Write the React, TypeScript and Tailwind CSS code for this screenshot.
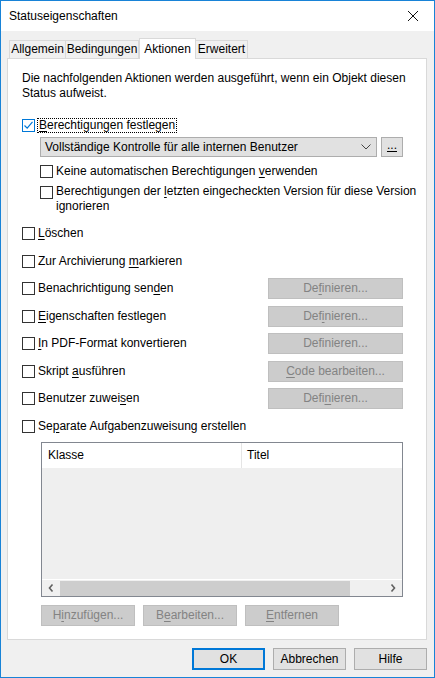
import type { ReactNode } from 'react'

const font = { fontFamily: '"Segoe UI", "Liberation Sans", Arial, sans-serif' }

function U({ children }: { children: ReactNode }) {
  return <span className="underline underline-offset-2 decoration-1">{children}</span>
}

function Box({ checked = false }: { checked?: boolean }) {
  return (
    <div
      className={
        'w-[13px] h-[13px] shrink-0 bg-white border flex items-center justify-center ' +
        (checked ? 'border-[#0078d7]' : 'border-[#333333]')
      }
    >
      {checked && (
        <svg width="11" height="11" viewBox="0 0 11 11">
          <path d="M1.5 5.5 L4.2 8.2 L9.5 1.8" fill="none" stroke="#0078d7" strokeWidth="1.2" />
        </svg>
      )}
    </div>
  )
}

function DisabledButton({ children, w = 'w-[135px]' }: { children: ReactNode; w?: string }) {
  return (
    <div
      className={
        'h-[21px] bg-[#cccccc] border border-[#bfbfbf] text-[#838383] flex items-center justify-center ' + w
      }
    >
      {children}
    </div>
  )
}

function Row({ label, button }: { label: ReactNode; button?: ReactNode }) {
  return (
    <div className="h-[27.5px] flex items-center">
      <Box />
      <span className="ml-[3px] flex-1">{label}</span>
      {button && <div className="mr-[23px]">{button}</div>}
    </div>
  )
}

function Tab({ children, w, active = false }: { children: ReactNode; w: string; active?: boolean }) {
  if (active)
    return (
      <div className={'h-[21px] -mb-px bg-white border border-b-0 border-[#d9d9d9] relative z-10 flex items-center justify-center ' + w}>
        {children}
      </div>
    )
  return (
    <div className={'h-[18px] bg-[#f0f0f0] border border-[#d9d9d9] border-b-0 -ml-px first:ml-0 flex items-center justify-center ' + w}>
      {children}
    </div>
  )
}

export default function App() {
  return (
    <div
      className="w-[435px] h-[678px] border border-[#1883d7] bg-[#f0f0f0] flex flex-col text-[12px] text-black leading-[15px]"
      style={font}
    >
      <div className="h-[30px] bg-white flex items-center justify-between pl-[8px] pr-[15px]">
        <span className="text-[12px]">Statuseigenschaften</span>
        <svg width="12" height="12" viewBox="0 0 12 12">
          <path d="M1 1 L11 11 M11 1 L1 11" stroke="#111" strokeWidth="1" />
        </svg>
      </div>

      <div className="flex items-end pl-[8px] pt-[7px]">
        <Tab w="w-[57px]">Allgemein</Tab>
        <Tab w="w-[74px]">Bedingungen</Tab>
        <Tab w="w-[57px]" active>Aktionen</Tab>
        <Tab w="w-[53px]">Erweitert</Tab>
      </div>

      <div className="ml-[6px] w-[420px] h-[582px] bg-white border border-[#d9d9d9] pl-[14px] pt-[12px] flex flex-col">
        <p className="whitespace-nowrap">
          Die nachfolgenden Aktionen werden ausgeführt, wenn ein Objekt diesen
          <br />
          Status aufweist.
        </p>

        <div className="mt-[16px] h-[17px] flex items-center">
          <Box checked />
          <span className="ml-[2px] px-px border border-dotted border-black leading-[13px]">
            <U>B</U>erechtigungen festlegen
          </span>
        </div>

        <div className="mt-[3px] ml-[18px] flex items-center">
          <div className="w-[337px] h-[20px] bg-[#e1e1e1] border border-[#adadad] flex items-center justify-between pl-[4px] pr-[5px]">
            <span>Vollständige Kontrolle für alle internen Benutzer</span>
            <svg width="10" height="6" viewBox="0 0 10 6">
              <path d="M0.5 0.5 L5 5 L9.5 0.5" fill="none" stroke="#444" strokeWidth="1" />
            </svg>
          </div>
          <div className="ml-[4px] w-[22px] h-[20px] bg-[#e1e1e1] border border-[#adadad] flex items-center justify-center">
            <span className="underline underline-offset-2 -mt-[4px]">...</span>
          </div>
        </div>

        <div className="mt-[6px] ml-[18px] h-[16px] flex items-center">
          <Box />
          <span className="ml-[3px]">
            Keine automatischen Berechtigungen <U>v</U>erwenden
          </span>
        </div>

        <div className="mt-[5px] ml-[18px] flex items-start">
          <div className="mt-[2px]">
            <Box />
          </div>
          <span className="ml-[3px] whitespace-nowrap">
            Berechtigungen der <U>l</U>etzten eingecheckten Version für diese Version
            <br />
            ignorieren
          </span>
        </div>

        <div className="mt-[6px] flex flex-col">
          <Row label={<><U>L</U>öschen</>} />
          <Row label={<>Zur Archivierung <U>m</U>arkieren</>} />
          <Row
            label={<>Benachrichtigung sen<U>d</U>en</>}
            button={<DisabledButton>De<U>f</U>inieren...</DisabledButton>}
          />
          <Row
            label={<><U>E</U>igenschaften festlegen</>}
            button={<DisabledButton>Def<U>i</U>nieren...</DisabledButton>}
          />
          <Row
            label={<><U>I</U>n PDF-Format konvertieren</>}
            button={<DisabledButton>Definieren...</DisabledButton>}
          />
          <Row
            label={<>Skript <U>a</U>usführen</>}
            button={<DisabledButton><U>C</U>ode bearbeiten...</DisabledButton>}
          />
          <Row
            label={<>Benutzer zuwei<U>s</U>en</>}
            button={<DisabledButton>Defi<U>n</U>ieren...</DisabledButton>}
          />
          <Row label={<>Se<U>p</U>arate Aufgabenzuweisung erstellen</>} />
        </div>

        <div className="mt-[2px] ml-[19px] w-[362px] h-[155px] border border-[#828790] bg-[#efefef] flex flex-col">
          <div className="h-[25px] bg-white flex shrink-0">
            <div className="w-[200px] border-r border-[#e5e5e5] pl-[6px] flex items-center">Klasse</div>
            <div className="flex-1 pl-[5px] flex items-center">Titel</div>
          </div>
          <div className="flex-1" />
          <div className="h-[17px] bg-[#f0f0f0] flex items-center border-t border-white">
            <div className="w-[18px] flex items-center justify-center">
              <svg width="6" height="8" viewBox="0 0 6 8">
                <path d="M4.5 0.5 L1.5 4 L4.5 7.5" fill="none" stroke="#606060" strokeWidth="1.6" />
              </svg>
            </div>
            <div className="w-[290px] h-[15px] bg-[#cdcdcd]" />
            <div className="flex-1 flex items-center justify-end pr-[6px]">
              <svg width="6" height="8" viewBox="0 0 6 8">
                <path d="M1.5 0.5 L4.5 4 L1.5 7.5" fill="none" stroke="#606060" strokeWidth="1.6" />
              </svg>
            </div>
          </div>
        </div>

        <div className="mt-[8px] ml-[19px] flex gap-[8px]">
          <DisabledButton w="w-[94px]">H<U>i</U>nzufügen...</DisabledButton>
          <DisabledButton w="w-[94px]">B<U>e</U>arbeiten...</DisabledButton>
          <DisabledButton w="w-[94px]"><U>E</U>ntfernen</DisabledButton>
        </div>
      </div>

      <div className="flex justify-end gap-[8px] pr-[7px] mt-[8px]">
        <div className="w-[73px] h-[22px] bg-[#e1e1e1] border-2 border-[#0078d7] flex items-center justify-center">OK</div>
        <div className="w-[73px] h-[22px] bg-[#e1e1e1] border border-[#adadad] flex items-center justify-center">Abbrechen</div>
        <div className="w-[73px] h-[22px] bg-[#e1e1e1] border border-[#adadad] flex items-center justify-center">Hilfe</div>
      </div>
    </div>
  )
}
